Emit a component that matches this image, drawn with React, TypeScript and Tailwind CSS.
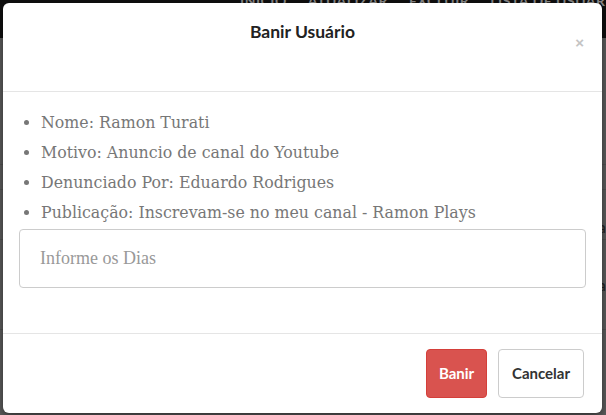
import { FC } from "react";

const items = [
  "Nome: Ramon Turati",
  "Motivo: Anuncio de canal do Youtube",
  "Denunciado Por: Eduardo Rodrigues",
  "Publicação: Inscrevam-se no meu canal - Ramon Plays",
];

const BanModal: FC = () => {
  return (
    <div className="absolute left-[3px] top-[3px] w-[599px] h-[410px] bg-white rounded-[6px] shadow-[0_3px_9px_rgba(0,0,0,0.5)] flex flex-col">
      <div className="relative h-[89px] border-b border-[#e5e5e5] shrink-0">
        <h4 className="text-center pt-[17px] text-[17.5px] font-bold text-[#222] font-['Lato',sans-serif] leading-[24px]">
          Banir Usuário
        </h4>
        <button className="absolute right-[18px] top-[32px] text-[#c4c4c4] text-[15px] font-bold leading-none font-['Liberation_Sans',sans-serif]">
          ×
        </button>
      </div>
      <div className="flex-1 px-[16px] pt-[15px]">
        <ul className="list-disc pl-[22px] text-[#777] marker:text-[#777] font-['DejaVu_Serif',serif] text-[15.8px] leading-[30px] pt-[1px]">
          {items.map((item) => (
            <li key={item} className="whitespace-nowrap">
              {item}
            </li>
          ))}
        </ul>
        <input
          placeholder="Informe os Dias"
          className="mt-[1px] w-full h-[59px] border border-[#ccc] rounded-[4px] px-[20px] text-[18px] font-['Liberation_Serif',serif] placeholder:text-[#999] outline-none"
        />
      </div>
      <div className="h-[80px] border-t border-[#e5e5e5] flex justify-end items-start gap-[11px] pt-[15px] pr-[18px] shrink-0">
        <button className="w-[61px] h-[49px] rounded-[4px] bg-[#d9534f] border border-[#d43f3a] text-white text-[15px] font-bold font-['Lato',sans-serif]">
          Banir
        </button>
        <button className="w-[86px] h-[49px] rounded-[4px] bg-white border border-[#ccc] text-[#333] text-[15px] font-bold font-['Lato',sans-serif]">
          Cancelar
        </button>
      </div>
    </div>
  );
};

export default function App() {
  return (
    <div className="relative w-[606px] h-[415px] overflow-hidden bg-[#5c5c5c]">
      <div className="h-[38px] bg-[#0f0f0f] overflow-hidden">
        <nav className="flex gap-[21px] pl-[240px] -mt-[10px] text-[14px] font-bold tracking-[0.5px] text-[#8a8a8a] font-['Lato',sans-serif] whitespace-nowrap">
          <span>INÍCIO</span>
          <span>ATUALIZAR</span>
          <span>EXCLUIR</span>
          <span>LISTA DE USUÁRIOS</span>
        </nav>
      </div>
      <div className="flex flex-col">
        <div className="h-[127px] border-b border-[#525252]" />
        <div className="h-[25px] border-b border-[#525252]" />
        <div className="h-[50px] border-b border-[#525252] flex justify-between items-end text-[16px] text-[#222] font-['Lato',sans-serif]">
          <span />
          <span>a</span>
        </div>
        <div className="h-[90px] border-b border-[#525252] flex justify-between items-center text-[16px] font-['Lato',sans-serif]">
          <span className="text-[#4a1020] -ml-[6px]">r</span>
          <span className="text-[#222]">a</span>
        </div>
      </div>
      <BanModal />
    </div>
  );
}
